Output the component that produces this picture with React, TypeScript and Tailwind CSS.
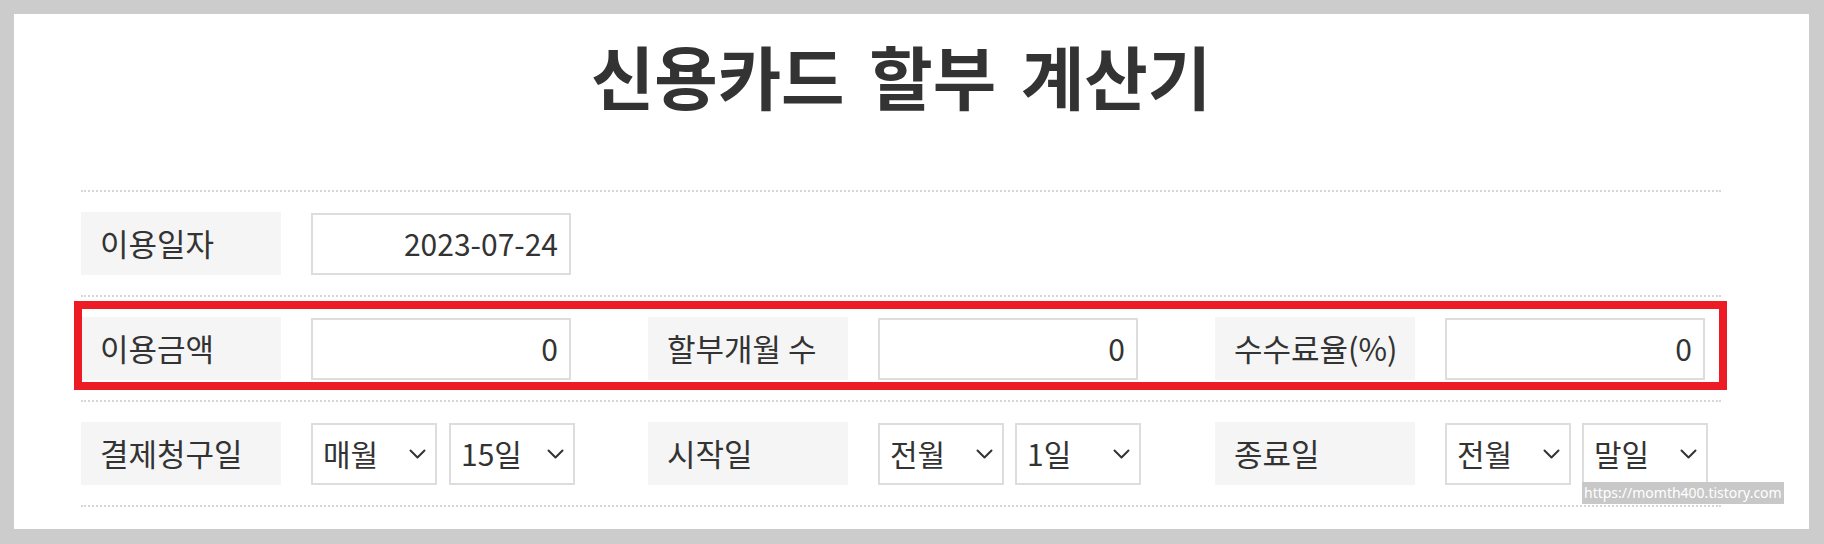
import React from "react";

const Chevron = () => (
  <svg width="17" height="10" viewBox="0 0 17 10" fill="none" className="shrink-0">
    <path d="M1.5 1.5 L8.5 8.5 L15.5 1.5" stroke="#333333" strokeWidth="2" strokeLinecap="round" strokeLinejoin="round" />
  </svg>
);

const Label = ({ children }: { children: React.ReactNode }) => (
  <div className="shrink-0 w-[200px] h-[63px] bg-[#f5f5f5] pl-[19px] flex items-center text-[31px] text-[#333333] whitespace-nowrap">
    {children}
  </div>
);

const Input = ({ value }: { value: string }) => (
  <div className="shrink-0 w-[260px] h-[62px] border-2 border-[#dddddd] bg-white flex items-center justify-end pr-[11px] text-[30px] text-[#333333]">
    {value}
  </div>
);

const Select = ({ value }: { value: string }) => (
  <div className="shrink-0 w-[126px] h-[62px] border-2 border-[#dddddd] bg-white flex items-center justify-between pl-[10px] pr-[9px] text-[30px] text-[#333333]">
    <span>{value}</span>
    <Chevron />
  </div>
);

const Group = ({ children }: { children: React.ReactNode }) => (
  <div className="shrink-0 flex items-center gap-[30px] w-[490px]">{children}</div>
);

export default function App() {
  return (
    <div className="relative w-[1824px] h-[544px] bg-[#cccccc] pt-[14px] pl-[14px] pr-[15px] pb-[15px] font-['Noto_Sans_CJK_KR',sans-serif]">
      <div className="bg-white h-full pl-[67px]">
        <div className="w-[1640px]">
          <h1 className="h-[176px] pt-[27px] text-center text-[69px] leading-none font-bold text-[#333333] [word-spacing:9px]">
            신용카드 할부 계산기
          </h1>
          <div className="border-t-2 border-dotted border-[#d6d6d6]">
            <div className="flex items-center gap-[77px] py-[20px] border-b-2 border-dotted border-[#d6d6d6]">
              <Group>
                <Label>이용일자</Label>
                <Input value="2023-07-24" />
              </Group>
            </div>
            <div className="relative flex items-center gap-[77px] py-[20px] border-b-2 border-dotted border-[#d6d6d6]">
              <Group>
                <Label>이용금액</Label>
                <Input value="0" />
              </Group>
              <Group>
                <Label>할부개월 수</Label>
                <Input value="0" />
              </Group>
              <Group>
                <Label>수수료율(%)</Label>
                <Input value="0" />
              </Group>
              <div className="absolute top-[4px] left-[-7px] right-[-6px] h-[89px] border-[8px] border-[#ed1c24] pointer-events-none" />
            </div>
            <div className="flex items-center gap-[77px] py-[20px] border-b-2 border-dotted border-[#d6d6d6]">
              <Group>
                <Label>결제청구일</Label>
                <div className="shrink-0 flex gap-[12px]">
                  <Select value="매월" />
                  <Select value="15일" />
                </div>
              </Group>
              <Group>
                <Label>시작일</Label>
                <div className="shrink-0 flex gap-[11px]">
                  <Select value="전월" />
                  <Select value="1일" />
                </div>
              </Group>
              <Group>
                <Label>종료일</Label>
                <div className="shrink-0 flex gap-[11px]">
                  <Select value="전월" />
                  <Select value="말일" />
                </div>
              </Group>
            </div>
          </div>
        </div>
      </div>
      <div className="absolute left-[1582px] top-[482px] w-[202px] h-[22px] bg-[#c8c8c8] text-white text-[14px] leading-[22px] pl-[2px] whitespace-nowrap overflow-hidden font-['Noto_Sans',sans-serif]">
        https://momth400.tistory.com
      </div>
    </div>
  );
}
